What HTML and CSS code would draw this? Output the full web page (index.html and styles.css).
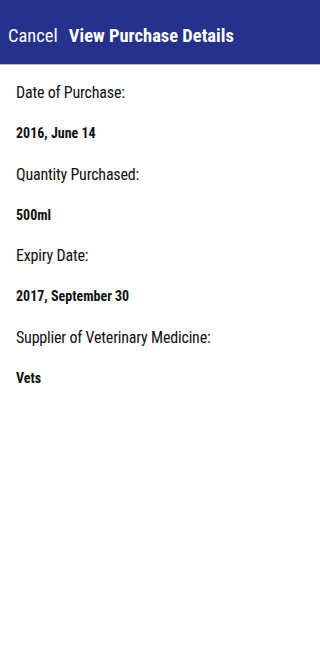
FILE: index.html
```html
<!DOCTYPE html>
<html>
<head>
<meta charset="utf-8">
<link rel="stylesheet" href="styles.css">
</head>
<body>
<header class="bar">
  <span class="cancel">Cancel</span>
  <span class="title">View Purchase Details</span>
</header>
<main class="details">
  <div class="label">Date of Purchase:</div>
  <div class="value">2016, June 14</div>
  <div class="label">Quantity Purchased:</div>
  <div class="value">500ml</div>
  <div class="label">Expiry Date:</div>
  <div class="value">2017, September 30</div>
  <div class="label">Supplier of Veterinary Medicine:</div>
  <div class="value">Vets</div>
</main>
</body>
</html>
```
FILE: styles.css
```css
html, body {
  margin: 0;
  padding: 0;
  background: #ffffff;
  font-family: Roboto, "Liberation Sans", sans-serif;
  font-stretch: 75%;
}
.bar {
  height: 65px;
  background: #25318a;
  border-bottom: 1px solid #b4b7d6;
  display: flex;
  align-items: flex-end;
  padding: 0 0 16px 8px;
  box-sizing: border-box;
  gap: 11px;
  color: #ffffff;
}
.cancel {
  font-size: 18.5px;
  line-height: 24px;
  font-weight: 400;
}
.title {
  font-size: 18.5px;
  line-height: 24px;
  font-weight: 700;
}
.details {
  padding: 8px 16px 0;
}
.label {
  font-size: 16px;
  line-height: 39px;
  color: #111111;
  letter-spacing: -0.2px;
}
.value {
  font-size: 14px;
  line-height: 42.5px;
  font-weight: 700;
  color: #111111;
}
```
